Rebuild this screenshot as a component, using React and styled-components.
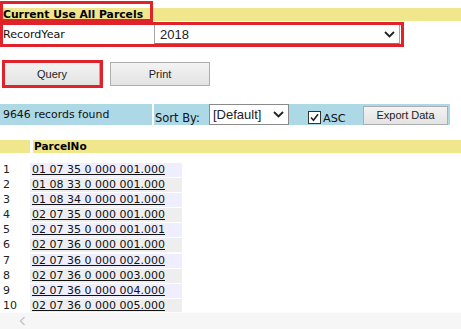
import React from "react";
import styled, { createGlobalStyle } from "styled-components";

const parcels = [
  "01 07 35 0 000 001.000",
  "01 08 33 0 000 001.000",
  "01 08 34 0 000 001.000",
  "02 07 35 0 000 001.000",
  "02 07 35 0 000 001.001",
  "02 07 36 0 000 001.000",
  "02 07 36 0 000 002.000",
  "02 07 36 0 000 003.000",
  "02 07 36 0 000 004.000",
  "02 07 36 0 000 005.000",
];

const Chevron = ({ w = 11, h = 7 }) => (
  <svg width={w} height={h} viewBox="0 0 11 7">
    <path d="M1 1 L5.5 5.5 L10 1" fill="none" stroke="#222" strokeWidth="1.8" />
  </svg>
);

export default function App() {
  return (
    <>
      <GlobalStyle />
      <Page>
        <Content>
          <TitleBar>
            <Title>Current Use All Parcels</Title>
          </TitleBar>

          <FormRow>
            <Label>RecordYear</Label>
            <YearSelect>
              <span>2018</span>
              <Chevron />
            </YearSelect>
          </FormRow>

          <ButtonRow>
            <Button $width={96} $marked>Query</Button>
            <Button $width={100}>Print</Button>
          </ButtonRow>

          <InfoBar>
            <CountCell>9646 records found</CountCell>
            <SortCell>
              <SortLabel>Sort By:</SortLabel>
              <SortSelect>
                <span>[Default]</span>
                <Chevron />
              </SortSelect>
              <Check>
                <svg width="9" height="9" viewBox="0 0 9 9">
                  <path d="M1 4.5 L3.5 7.2 L8 1.2" fill="none" stroke="#222" strokeWidth="1.6" />
                </svg>
              </Check>
              <AscLabel>ASC</AscLabel>
              <ExportButton>Export Data</ExportButton>
            </SortCell>
          </InfoBar>

          <HeaderRow>
            <HeadCell $width="29px" />
            <HeadCell $width="auto">ParcelNo</HeadCell>
          </HeaderRow>

          <Rows>
            {parcels.map((p, i) => (
              <Row key={p}>
                <Num>{i + 1}</Num>
                <ParcelCell $alt={i % 2 === 1}>
                  <ParcelLink href="#">{p}</ParcelLink>
                </ParcelCell>
              </Row>
            ))}
          </Rows>
        </Content>

        <ScrollBar>
          <svg width="7" height="10" viewBox="0 0 7 10">
            <path d="M5.5 1 L1.5 5 L5.5 9" fill="none" stroke="#c4c4c4" strokeWidth="1.4" />
          </svg>
        </ScrollBar>
      </Page>
    </>
  );
}

const GlobalStyle = createGlobalStyle`
  body {
    margin: 0;
    background: #fff;
    font-family: "DejaVu Sans", Verdana, sans-serif;
    color: #111;
  }
`;

const Page = styled.div`
  height: 329px;
  display: flex;
  flex-direction: column;
  overflow: hidden;
`;

const Content = styled.div`
  flex: 1;
  overflow: hidden;
  padding-top: 8px;
`;

const TitleBar = styled.div`
  height: 13px;
  background: #f0e68c;
  display: flex;
  align-items: center;
`;

const Title = styled.div`
  position: relative;
  width: 150px;
  height: 13px;
  line-height: 13px;
  padding-left: 3px;
  font-size: 10.8px;
  font-weight: bold;
  color: #000;

  &::after {
    content: "";
    position: absolute;
    inset: -7px 0 -1px 0;
    border: 3px solid #e0222b;
  }
`;

const FormRow = styled.div`
  position: relative;
  width: 404px;
  height: 20px;
  margin-top: 3px;
  display: flex;
  align-items: center;

  &::after {
    content: "";
    position: absolute;
    inset: -2px 0 -3px 0;
    border: 3px solid #e0222b;
  }
`;

const Label = styled.div`
  width: 151px;
  padding-left: 3px;
  font-size: 11.1px;
`;

const YearSelect = styled.div`
  box-sizing: border-box;
  width: 246px;
  height: 20px;
  display: flex;
  align-items: center;
  justify-content: space-between;
  padding: 0 4px 0 5px;
  border: 1px solid #a6a6a6;
  border-bottom-color: #7a7a7a;
  background: #fff;
  font-family: "Liberation Sans", Arial, sans-serif;
  font-size: 13px;
  color: #222;
`;

const ButtonRow = styled.div`
  display: flex;
  gap: 10px;
  margin-top: 18px;
  padding-left: 4px;
`;

const Button = styled.div`
  position: relative;
  box-sizing: border-box;
  width: ${(p) => p.$width}px;
  height: 24px;
  display: flex;
  align-items: center;
  justify-content: center;
  border: 1px solid #adadad;
  background: linear-gradient(#f3f3f3, #e3e3e3);
  font-family: "Liberation Sans", Arial, sans-serif;
  font-size: 11px;
  color: #222;

  ${(p) =>
    p.$marked &&
    `
    &::after {
      content: "";
      position: absolute;
      inset: -3px -4px -3px -3px;
      border: 3px solid #e0222b;
    }
  `}
`;

const InfoBar = styled.div`
  width: 450px;
  height: 21px;
  margin-top: 18px;
  display: flex;
  gap: 2px;
`;

const CountCell = styled.div`
  width: 149px;
  padding-left: 3px;
  background: #add8e6;
  display: flex;
  align-items: center;
  font-size: 10.9px;
`;

const SortCell = styled.div`
  flex: 1;
  background: #add8e6;
  display: flex;
  align-items: center;
  padding-left: 1px;
`;

const SortLabel = styled.span`
  font-size: 11.5px;
  padding-top: 6px;
`;

const SortSelect = styled.div`
  box-sizing: border-box;
  width: 80px;
  height: 21px;
  margin-left: 9px;
  margin-top: -1px;
  display: flex;
  align-items: center;
  justify-content: space-between;
  padding: 0 4px 0 3px;
  border: 1px solid #8a8a8a;
  background: #fff;
  font-family: "Liberation Sans", Arial, sans-serif;
  font-size: 13px;
  color: #222;
`;

const Check = styled.div`
  box-sizing: border-box;
  width: 13px;
  height: 13px;
  margin-left: 19px;
  margin-top: 6px;
  border: 1px solid #333;
  background: #fff;
  display: flex;
  align-items: center;
  justify-content: center;
`;

const AscLabel = styled.span`
  font-size: 11.3px;
  margin-left: 2px;
  padding-top: 7px;
`;

const ExportButton = styled.div`
  box-sizing: border-box;
  width: 85px;
  height: 19px;
  margin-left: auto;
  margin-right: 2px;
  margin-top: 1px;
  display: flex;
  align-items: center;
  justify-content: center;
  border: 1px solid #adadad;
  background: linear-gradient(#f3f3f3, #e3e3e3);
  font-family: "Liberation Sans", Arial, sans-serif;
  font-size: 11px;
  color: #222;
`;

const HeaderRow = styled.div`
  height: 13px;
  margin-top: 15px;
  display: flex;
  gap: 3px;
`;

const HeadCell = styled.div`
  width: ${(p) => p.$width};
  flex: ${(p) => (p.$width === "auto" ? 1 : "none")};
  background: #f0e68c;
  padding-left: 1px;
  font-size: 10.5px;
  font-weight: bold;
  line-height: 13px;
  color: #000;
`;

const Rows = styled.div`
  margin-top: 10px;
  display: flex;
  flex-direction: column;
  gap: 1.1px;
`;

const Row = styled.div`
  display: flex;
  height: 14px;
  font-size: 11px;
  line-height: 14px;
`;

const Num = styled.div`
  width: 27px;
  padding-left: 3px;
  color: #222;
`;

const ParcelCell = styled.div`
  width: 150px;
  padding-left: 2px;
  background: ${(p) => (p.$alt ? "#eeeeee" : "#eeeeff")};
`;

const ParcelLink = styled.a`
  color: #111;
  text-decoration: underline;
`;

const ScrollBar = styled.div`
  height: 16px;
  background: #f6f6f6;
  border-top: 1px solid #fbfbfb;
  display: flex;
  align-items: center;
  padding-left: 19px;
`;
